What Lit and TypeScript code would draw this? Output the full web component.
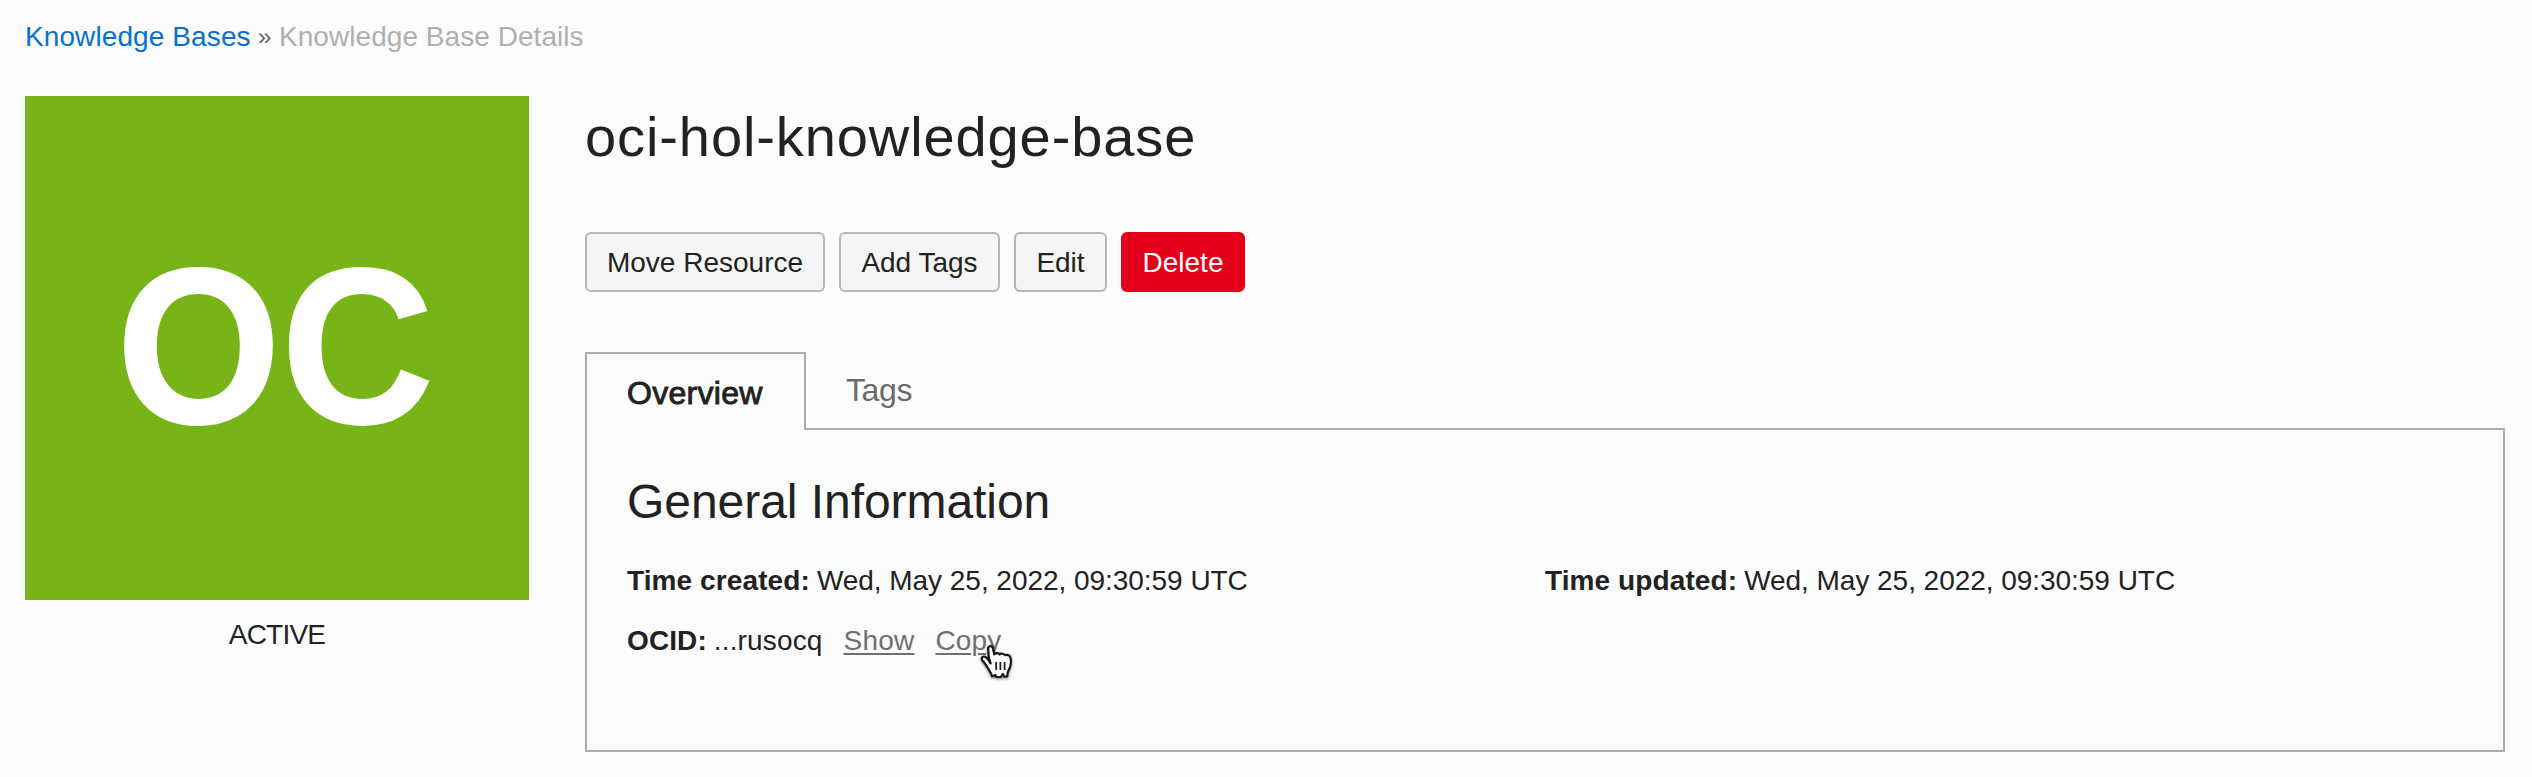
import { LitElement, html, css } from "lit";
import { customElement } from "lit/decorators.js";

@customElement("hand-cursor")
class HandCursor extends LitElement {
  static styles = css`
    :host { display: block; width: 36px; height: 38px; }
    svg { display: block; overflow: visible; filter: drop-shadow(0 1.5px 1.5px rgba(0, 0, 0, 0.5)); }
  `;
  render() {
    return html`<svg width="36" height="38" viewBox="0 0 36 38">
      <path d="M10.6 20.4 8.8 14 8.2 6.1C8 2.4 12 2 12.8 5.2L14.4 11.4C15.6 9.6 18.6 9.8 19.6 11.4 21 10.2 24 10.6 25 12.2 26.8 11.4 29.8 12 30.4 14.4 31.2 17.6 31.2 20.6 30 24.2 29 26.6 27.4 27.8 27.2 33.4L24.2 33.6 22.8 31 20.8 34 16.4 34 15.4 32 12 33.4C11.4 29.2 8.4 26.6 6.4 22.8 5 20.2 3.2 18.8 2.2 17 .9 14.2 3.6 12.6 5.8 14.2 7.6 15.6 9.2 17.6 10.6 20.4Z"
        fill="#fff" stroke="#161616" stroke-width="2.2" stroke-linejoin="round"/>
      <path d="M16.2 19v8M20.4 19v8M24.6 19v8" fill="none" stroke="#222" stroke-width="1.8"/>
    </svg>`;
  }
}

@customElement("app-root")
class AppRoot extends LitElement {
  static styles = css`
    :host {
      display: block; box-sizing: border-box; height: 777px; padding: 17px 27px 0 25px;
      background: #fcfcfc; color: #222; overflow: hidden;
      font: 28px/40px "Liberation Sans", Arial, Helvetica, sans-serif; white-space: nowrap;
    }
    * { box-sizing: border-box; }
    .crumbs { height: 79px; display: flex; color: #afafaf; }
    .crumbs .link { color: #0572ce; width: 233px; letter-spacing: 0.1px; }
    .crumbs .sep { color: #666; width: 21px; font-size: 24px; }
    .crumbs .here { letter-spacing: 0.05px; }
    .main { display: flex; gap: 56px; }
    .side { width: 504px; text-align: center; }
    .tile {
      height: 504px; line-height: 501px; background: #77b417; color: #fff;
      font-size: 221px; font-weight: 700; letter-spacing: 0.6px; margin-bottom: 15px;
      -webkit-text-stroke: 2px #fff;
    }
    .initials { display: inline-block; transform: translateX(-2px) scaleX(0.955); }
    .status { letter-spacing: -0.8px; }
    .body { flex: 1; }
    h1 { margin: 0; font-size: 56px; font-weight: 400; line-height: 82px; height: 136px; letter-spacing: 0.9px; }
    .actions { display: flex; gap: 14px; height: 60px; margin-bottom: 60px; }
    .btn {
      font: inherit; color: #222; background: #f5f5f5; border: 2px solid #b0b7c0; border-radius: 6px;
      padding: 2px 0 0; height: 60px; text-align: center;
    }
    .move { width: 240px; } .add { width: 161px; } .edit { width: 93px; }
    .danger { width: 124px; background: #e4001b; border-color: #e4001b; color: #fff; }
    .tabs { display: flex; height: 78px; font-size: 32px; }
    .tab { padding: 18px 40px 0; color: #6a6a6a; letter-spacing: -0.4px; }
    .tab.on {
      width: 221px; height: 78px; padding-top: 19px; color: #222; border: 2px solid #adadad; border-bottom: 0;
      background: #fcfcfc; z-index: 1; -webkit-text-stroke: 0.9px #222; letter-spacing: 0.3px;
    }
    .panel { border: 2px solid #adadad; height: 324px; margin-top: -2px; padding: 42px 40px 0; }
    h2 { margin: 0; font-size: 48px; font-weight: 400; line-height: 60px; height: 89px; letter-spacing: -0.05px; }
    .grid { display: grid; grid-template-columns: 1fr 1fr; row-gap: 20px; }
    .field { display: flex; }
    .field b { margin-right: 7px; letter-spacing: 0.1px; }
    .val { letter-spacing: -0.04px; }
    .id { letter-spacing: 0.15px; }
    .lnk { color: #6f6f6f; text-decoration: underline; text-decoration-thickness: 2px; text-underline-offset: 3px; letter-spacing: 0.2px; }
    .show { margin-left: 21px; }
    .copy { margin-left: 21px; position: relative; }
    .pointer { position: absolute; left: 45px; top: 22px; }
  `;

  render() {
    return html`
      <nav class="crumbs"><span class="link">Knowledge Bases</span><span class="sep">»</span><span class="here">Knowledge Base Details</span></nav>
      <div class="main">
        <div class="side">
          <div class="tile"><span class="initials">OC</span></div>
          <div class="status">ACTIVE</div>
        </div>
        <div class="body">
          <h1>oci-hol-knowledge-base</h1>
          <div class="actions">
            <button class="btn move">Move Resource</button>
            <button class="btn add">Add Tags</button>
            <button class="btn edit">Edit</button>
            <button class="btn danger">Delete</button>
          </div>
          <div class="tabs"><div class="tab on">Overview</div><div class="tab">Tags</div></div>
          <section class="panel">
            <h2>General Information</h2>
            <div class="grid">
              <div class="field"><b>Time created:</b><span class="val">Wed, May 25, 2022, 09:30:59 UTC</span></div>
              <div class="field"><b>Time updated:</b><span class="val">Wed, May 25, 2022, 09:30:59 UTC</span></div>
              <div class="field">
                <b>OCID:</b><span class="id">...rusocq</span><span class="lnk show">Show</span>
                <span class="copy"><span class="lnk">Copy</span><hand-cursor class="pointer"></hand-cursor></span>
              </div>
            </div>
          </section>
        </div>
      </div>`;
  }
}
